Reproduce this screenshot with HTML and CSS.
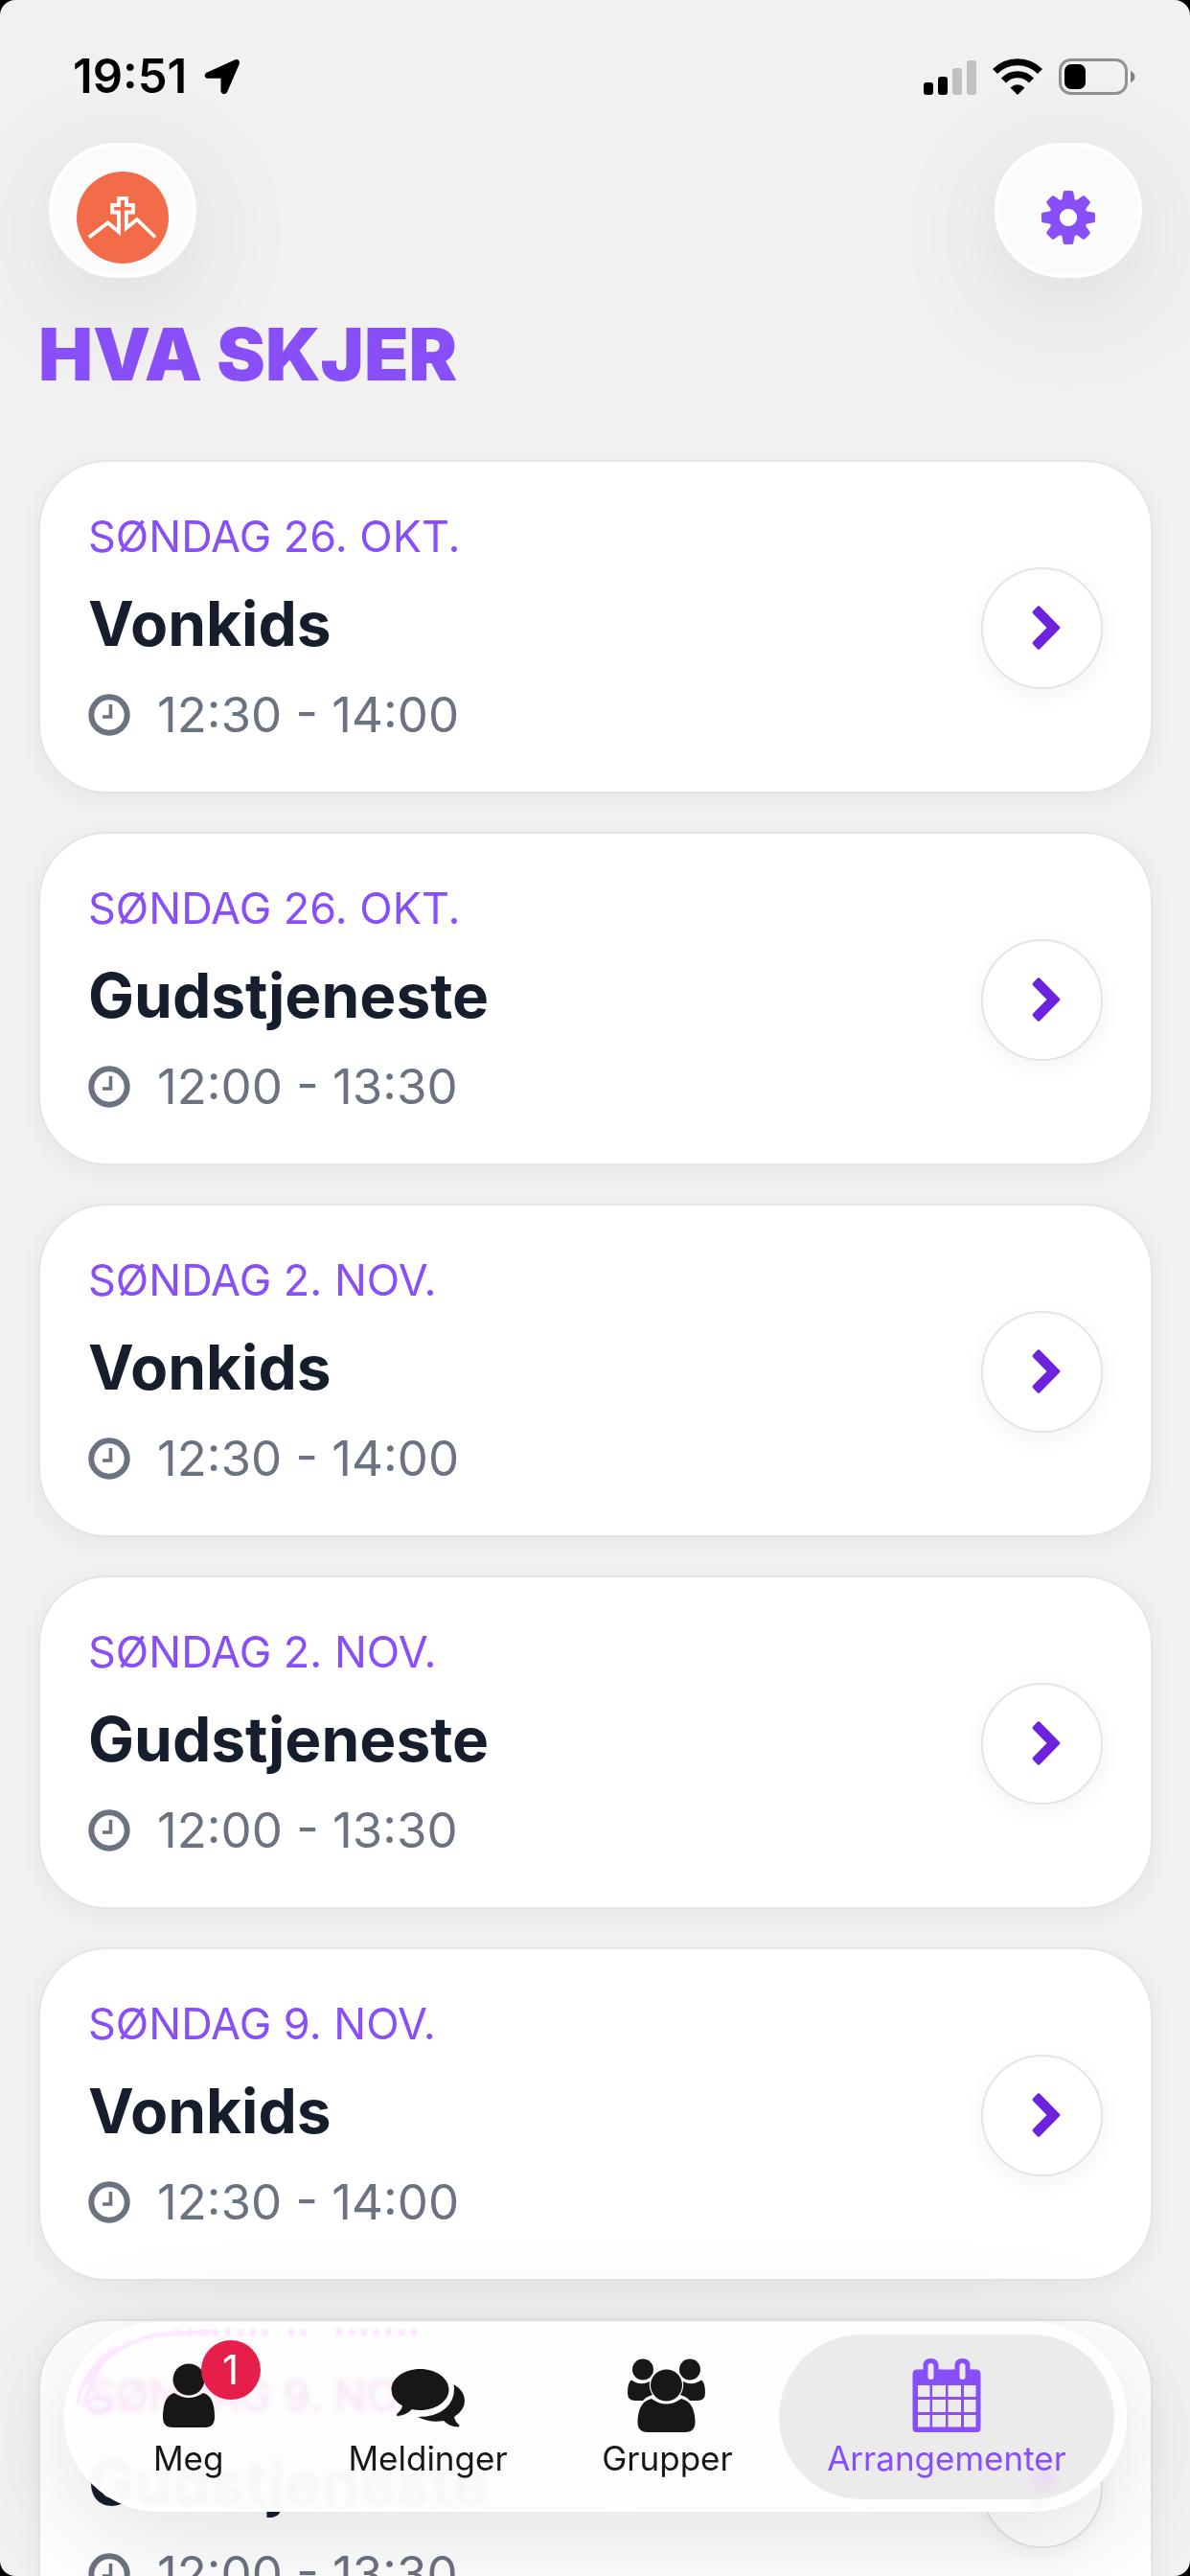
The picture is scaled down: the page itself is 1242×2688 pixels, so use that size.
FILE: index.html
```html
<!DOCTYPE html>
<html lang="nb">
<head>
    <meta charset="UTF-8">
    <meta name="viewport" content="width=device-width, initial-scale=1.0">
    <title>Hva skjer</title>
    <link rel="stylesheet" href="styles.css">
</head>
<body>
    <svg class="sprite" aria-hidden="true">
        <symbol id="icon-clock" viewBox="0 0 44 44">
            <circle cx="22" cy="22" r="18.7" fill="none" stroke="currentColor" stroke-width="6"/>
            <path d="M23.5 11v13h-8.5" fill="none" stroke="currentColor" stroke-width="3.6"/>
        </symbol>
        <symbol id="icon-chevron" viewBox="0 0 30 46">
            <path d="M8 .5L29 22Q30 23 29 24L8 45.500Q7 46 6 45.500L.8 40Q.3 39 .8 38L15.500 23L.8 8Q.3 7 .8 6L6 .5Q7 0 8 .5Z" fill="currentColor"/>
        </symbol>
    </svg>

    <div class="screen">
        <div class="status-bar">
            <div class="status-left">
                <span class="clock">19:51</span>
                <svg class="location" viewBox="0 0 38 38" aria-hidden="true">
                    <path d="M2.500 16L33 2.200Q36 1.500 36 5L23 35Q20.500 37.500 18.500 34.500V19.800H3Q.5 18.500 2.500 16Z" fill="#000" stroke="#000" stroke-width="2" stroke-linejoin="round"/>
                </svg>
            </div>
            <div class="status-right">
                <svg class="signal" viewBox="0 0 55 38" aria-hidden="true">
                    <rect x="0" y="25" width="10" height="13" rx="3"/>
                    <rect x="15" y="19" width="10" height="19" rx="3"/>
                    <rect x="30" y="10" width="10" height="28" rx="3" fill="#c1c1c1"/>
                    <rect x="45" y="2" width="10" height="36" rx="3" fill="#c1c1c1"/>
                </svg>
                <svg class="wifi" viewBox="0 0 52 38" aria-hidden="true">
                    <path d="M2.500 13.500A33 33 0 0 1 49.500 13.500" fill="none" stroke="#000" stroke-width="7"/>
                    <path d="M11.500 23A20 20 0 0 1 40.500 23" fill="none" stroke="#000" stroke-width="7"/>
                    <path d="M18.500 30.500Q26 24 33.500 30.500L26 38Z"/>
                </svg>
                <svg class="battery" viewBox="0 0 80 38" aria-hidden="true">
                    <rect x="1.500" y="1.500" width="69" height="35" rx="11" fill="none" stroke="#919191" stroke-width="3"/>
                    <rect x="6" y="6" width="22" height="26" rx="7"/>
                    <path d="M75 13q4.500 2 4.500 6t-4.500 6z" fill="#808080"/>
                </svg>
            </div>
        </div>

        <header class="top-bar">
            <button class="round-btn" type="button" aria-label="Menighet">
                <svg class="logo" viewBox="0 0 96 96" aria-hidden="true">
                    <circle cx="48" cy="48" r="48" fill="#f36c4a"/>
                    <path d="M13 68.500L32.700 53.500L44 63V42.500H37.200V35H44V28H52V35H59V42.500H51.800V59L63 50L82 68.500" fill="none" stroke="#fff" stroke-width="3.800"/>
                </svg>
            </button>
            <button class="round-btn" type="button" aria-label="Innstillinger">
                <svg class="gear" viewBox="-28 -28 56 56" aria-hidden="true">
                    <g fill="currentColor">
                        <path id="teeth" d="M-7 -17L-5.300 -26.500Q-5 -28 -3.500 -28H3.500Q5 -28 5.300 -26.500L7 -17V17L5.300 26.500Q5 28 3.500 28H-3.500Q-5 28 -5.300 26.500L-7 17V10H7V-10H-7Z"/>
                        <use href="#teeth" transform="rotate(45)"/>
                        <use href="#teeth" transform="rotate(90)"/>
                        <use href="#teeth" transform="rotate(135)"/>
                    </g>
                    <circle r="14.500" fill="none" stroke="currentColor" stroke-width="11"/>
                    <circle r="9" fill="#fff"/>
                </svg>
            </button>
        </header>

        <main>
            <h1>HVA SKJER</h1>

            <ul class="events">
                <li class="event">
                    <div class="event-info">
                        <p class="event-date">SØNDAG 26. OKT.</p>
                        <h2>Vonkids</h2>
                        <p class="event-time"><svg aria-hidden="true"><use href="#icon-clock"/></svg>12:30 - 14:00</p>
                    </div>
                    <a class="event-link" href="#" aria-label="Åpne Vonkids"><svg aria-hidden="true"><use href="#icon-chevron"/></svg></a>
                </li>
                <li class="event">
                    <div class="event-info">
                        <p class="event-date">SØNDAG 26. OKT.</p>
                        <h2>Gudstjeneste</h2>
                        <p class="event-time"><svg aria-hidden="true"><use href="#icon-clock"/></svg>12:00 - 13:30</p>
                    </div>
                    <a class="event-link" href="#" aria-label="Åpne Gudstjeneste"><svg aria-hidden="true"><use href="#icon-chevron"/></svg></a>
                </li>
                <li class="event">
                    <div class="event-info">
                        <p class="event-date">SØNDAG 2. NOV.</p>
                        <h2>Vonkids</h2>
                        <p class="event-time"><svg aria-hidden="true"><use href="#icon-clock"/></svg>12:30 - 14:00</p>
                    </div>
                    <a class="event-link" href="#" aria-label="Åpne Vonkids"><svg aria-hidden="true"><use href="#icon-chevron"/></svg></a>
                </li>
                <li class="event">
                    <div class="event-info">
                        <p class="event-date">SØNDAG 2. NOV.</p>
                        <h2>Gudstjeneste</h2>
                        <p class="event-time"><svg aria-hidden="true"><use href="#icon-clock"/></svg>12:00 - 13:30</p>
                    </div>
                    <a class="event-link" href="#" aria-label="Åpne Gudstjeneste"><svg aria-hidden="true"><use href="#icon-chevron"/></svg></a>
                </li>
                <li class="event">
                    <div class="event-info">
                        <p class="event-date">SØNDAG 9. NOV.</p>
                        <h2>Vonkids</h2>
                        <p class="event-time"><svg aria-hidden="true"><use href="#icon-clock"/></svg>12:30 - 14:00</p>
                    </div>
                    <a class="event-link" href="#" aria-label="Åpne Vonkids"><svg aria-hidden="true"><use href="#icon-chevron"/></svg></a>
                </li>
                <li class="event">
                    <div class="event-info">
                        <p class="event-date">SØNDAG 9. NOV.</p>
                        <h2>Gudstjeneste</h2>
                        <p class="event-time"><svg aria-hidden="true"><use href="#icon-clock"/></svg>12:00 - 13:30</p>
                    </div>
                    <a class="event-link" href="#" aria-label="Åpne Gudstjeneste"><svg aria-hidden="true"><use href="#icon-chevron"/></svg></a>
                </li>
            </ul>
        </main>

        <nav class="tab-bar">
            <!-- soft light bending along the rounded glass edge -->
            <svg class="glare" viewBox="0 0 400 100" aria-hidden="true">
                <path d="M10 82Q16 42 54 22M16 84Q24 54 46 24M20 60Q40 22 90 10L150 6M30 90Q18 88 22 78Q34 72 44 80Q46 90 30 90" stroke-width="4"/>
                <path d="M112 7H210M230 7H252M280 7H366" stroke-width="7" stroke-dasharray="6 7"/>
            </svg>
            <a class="tab" href="#">
                <span class="tab-icon">
                    <svg viewBox="0 0 84 78" aria-hidden="true">
                        <path d="M27 36Q42 46 57 36Q69 39 69 61Q69 72 59 72H25Q15 72 15 61Q15 39 27 36Z"/>
                        <circle cx="42" cy="22" r="16.500"/>
                    </svg>
                    <span class="badge">1</span>
                </span>
                Meg
            </a>
            <a class="tab" href="#">
                <span class="tab-icon">
                    <svg viewBox="0 0 84 78" aria-hidden="true">
                        <path d="M33.500 11C50 11 63.500 20.500 63.500 32.500S50 54 33.500 54Q29 54 25 53Q18 60 9.500 60Q8 59 9.500 57.500Q14 54 15 49.500Q3.500 43 3.500 32.500C3.500 20.500 17 11 33.500 11Z"/>
                        <path d="M68.500 27Q80 34 80 44Q80 54 69 61Q70 66 74 69Q75 71 73.500 71.500Q64 71 58 65Q44 67.500 31 61Q50 61 60 52Q71 42 68.500 27Z"/>
                    </svg>
                </span>
                Meldinger
            </a>
            <a class="tab" href="#">
                <span class="tab-icon">
                    <svg viewBox="0 0 84 78" aria-hidden="true">
                        <circle cx="17" cy="11.500" r="11"/>
                        <circle cx="66" cy="11.500" r="11"/>
                        <path d="M5 22.500Q14 29 24 24Q23 32 27 38Q20 40 17 44H9Q1 44 1 36Q1 25 5 22.500Z"/>
                        <path d="M78 22.500Q69 29 59 24Q60 32 56 38Q63 40 66 44H74Q82 44 82 36Q82 25 78 22.500Z"/>
                        <circle cx="41.500" cy="28" r="16.500"/>
                        <path d="M26 42Q41.500 53 57 42Q71 45 71.500 66Q71.500 77 61 77H22Q11.500 77 11.500 66Q12 45 26 42Z"/>
                    </svg>
                </span>
                Grupper
            </a>
            <a class="tab active" href="#" aria-current="page">
                <span class="tab-icon">
                    <svg viewBox="0 0 84 78" aria-hidden="true">
                        <path fill-rule="evenodd" d="M10.500 11.500H17.500V8Q17.500 0 25.500 0T33.500 8V11.500H50.500V8Q50.500 0 58.500 0T66.500 8V11.500H73.500Q77.500 12 77.500 16V73Q77.500 77 73.500 77H10.500Q6.500 77 6.500 73V16Q6.500 12 10.500 11.500ZM22.500 8V19Q22.500 22 25.500 22T28.500 19V8Q28.500 5 25.500 5T22.500 8ZM55.500 8V19Q55.500 22 58.500 22T61.500 19V8Q61.500 5 58.500 5T55.500 8ZM12 28V40H24.500V28ZM27 28V40H41V28ZM43.500 28V40H57V28ZM60 28V40H72.500V28ZM12 43V56H24.500V43ZM27 43V56H41V43ZM43.500 43V56H57V43ZM60 43V56H72.500V43ZM12 59V71.500H24.500V59ZM27 59V71.500H41V59ZM43.500 59V71.500H57V59ZM60 59V71.500H72.500V59Z"/>
                    </svg>
                </span>
                Arrangementer
            </a>
        </nav>
    </div>
</body>
</html>
```
FILE: styles.css
```css
* {
    margin: 0;
    padding: 0;
    box-sizing: border-box;
}

html {
    background: #000;
}

body {
    font-family: Inter, "Liberation Sans", sans-serif;
    color: #161e2e;
}

.sprite {
    position: absolute;
    width: 0;
    height: 0;
}

.screen {
    height: 100vh;
    overflow-x: hidden;
    overflow-y: auto;
    scrollbar-width: none;
    background: #f1f1f1;
    border-radius: 16px;
}

/* Status bar */
.status-bar {
    display: flex;
    justify-content: space-between;
    align-items: center;
    padding: 50px 57px 39px 76px;
    color: #000;
}

.status-left {
    display: flex;
    align-items: center;
    gap: 18px;
}

.clock {
    font-size: 49px;
    line-height: 60px;
    font-weight: 600;
}

.location {
    width: 38px;
    height: 38px;
}

.status-right {
    display: flex;
    align-items: center;
    gap: 17px;
}

.signal {
    width: 55px;
    height: 38px;
}

.wifi {
    width: 52px;
    height: 38px;
}

.battery {
    width: 80px;
    height: 38px;
}

/* Header */
.top-bar {
    display: flex;
    justify-content: space-between;
    padding: 0 50px 0 51px;
}

.round-btn {
    display: flex;
    align-items: center;
    justify-content: center;
    width: 154px;
    height: 141px;
    padding-top: 15px;
    border: 4px solid #fff;
    border-radius: 72px;
    background: #fbfbfb;
    box-shadow: 0 24px 120px rgba(0, 0, 0, 0.1);
    color: #884ff8;
    cursor: pointer;
}

.logo {
    width: 96px;
    height: 96px;
}

.gear {
    width: 56px;
    height: 56px;
}

/* Events */
main {
    padding: 31px 39px 40px 40px;
}

h1 {
    margin-bottom: 63px;
    font-size: 76px;
    line-height: 96px;
    font-weight: 900;
    color: #884ff8;
}

.events {
    display: flex;
    flex-direction: column;
    gap: 40px;
    list-style: none;
}

.event {
    display: flex;
    align-items: center;
    justify-content: space-between;
    padding: 48px 50px 46px;
    border: 2px solid #e4e4ea;
    border-radius: 72px;
    background: #fff;
    box-shadow: 0 6px 24px rgba(0, 0, 0, 0.05);
}

.event-info {
    display: flex;
    flex-direction: column;
    gap: 20px;
}

.event-date {
    font-size: 45px;
    line-height: 60px;
    color: #884ff8;
}

h2 {
    font-size: 64px;
    line-height: 82px;
    font-weight: 700;
}

.event-time {
    display: flex;
    align-items: center;
    gap: 28px;
    font-size: 51px;
    line-height: 68px;
    color: #6b7280;
}

.event-time svg {
    width: 44px;
    height: 44px;
}

.event-link {
    display: flex;
    align-items: center;
    justify-content: center;
    width: 127px;
    height: 127px;
    padding-left: 8px;
    border: 2px solid #e4e4ea;
    border-radius: 50%;
    background: #fff;
    box-shadow: 0 6px 24px rgba(0, 0, 0, 0.05);
    color: #6d22dd;
}

.event-link svg {
    width: 30px;
    height: 46px;
}

/* Tab bar */
.tab-bar {
    position: fixed;
    left: 67px;
    right: 66px;
    bottom: 67px;
    display: grid;
    grid-template-columns: 14fr 16fr 14fr 21fr;
    padding: 9px;
    border: 4px solid #fff;
    border-radius: 99px;
    background: linear-gradient(rgba(253, 253, 253, 0.84) 50%, rgba(253, 253, 253, 0.97) 62%);
    backdrop-filter: blur(3px) hue-rotate(35deg);
    box-shadow: 0 24px 120px rgba(0, 0, 0, 0.12);
}

.glare {
    position: absolute;
    top: 0;
    left: 0;
    width: 400px;
    height: 100px;
    fill: none;
    stroke: #f9dcff;
    opacity: 0.7;
    filter: blur(1px);
}

.tab {
    position: relative;
    display: flex;
    flex-direction: column;
    align-items: center;
    gap: 5px;
    padding: 25px 0 22px;
    border-radius: 86px;
    font-size: 35px;
    line-height: 42px;
    color: #171717;
    text-decoration: none;
}

.tab.active {
    background: radial-gradient(circle at 79% 87%, #ecd9f4 0, #ebebeb 20px);
    color: #884ff8;
}

.tab-icon {
    position: relative;
    height: 78px;
}

.tab-icon svg {
    width: 84px;
    height: 78px;
    fill: currentColor;
}

.badge {
    position: absolute;
    top: -19px;
    left: 55px;
    width: 62px;
    height: 62px;
    border-radius: 50%;
    background: #e51f4a;
    color: #fff;
    font-size: 42px;
    line-height: 62px;
    text-align: center;
}
```
